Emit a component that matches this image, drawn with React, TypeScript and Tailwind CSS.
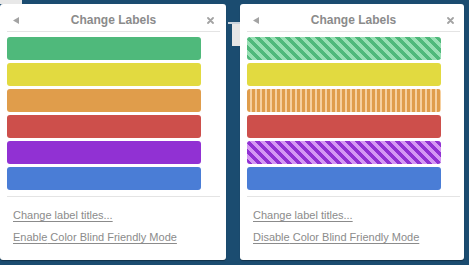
import React from "react";

type Bar = { cls: string };

const leftBars: Bar[] = [
  { cls: "bg-[#4fb97b]" },
  { cls: "bg-[#e2da40]" },
  { cls: "bg-[#e09d4b]" },
  { cls: "bg-[#cd4f4b]" },
  { cls: "bg-[#9131d3]" },
  { cls: "bg-[#4a7dd6]" },
];

const rightBars: Bar[] = [
  { cls: "bg-[repeating-linear-gradient(45deg,#4fb97b_0px,#4fb97b_3.6px,#97dfb4_3.6px,#97dfb4_7.1px)]" },
  { cls: "bg-[#e2da40]" },
  { cls: "bg-[repeating-linear-gradient(90deg,#e09d4b_0px,#e09d4b_2.6px,#f6d09f_2.6px,#f6d09f_5px)]" },
  { cls: "bg-[#cd4f4b]" },
  { cls: "bg-[repeating-linear-gradient(45deg,#9131d3_0px,#9131d3_3.6px,#d497f3_3.6px,#d497f3_7.1px)]" },
  { cls: "bg-[#4a7dd6]" },
];

function Panel({ width, bars, mode }: { width: string; bars: Bar[]; mode: string }) {
  return (
    <div
      className={`${width} h-[256px] shrink-0 bg-white rounded-[3px] shadow-[0_1px_1px_rgba(0,0,0,0.35)] px-[7px]`}
      style={{ fontFamily: '"Liberation Sans", Arial, sans-serif' }}
    >
      <div className="w-[213px] h-[28px] border-b border-[#e4e4e4] relative flex items-center justify-center">
        <svg className="absolute left-[6px] top-[13px]" width="6" height="7" viewBox="0 0 6 7">
          <polygon points="6,0 6,7 0,3.5" fill="#a3a3a3" />
        </svg>
        <span className="text-[12px] font-bold text-[#8b8b8b] leading-none mt-[4px]">Change Labels</span>
        <svg className="absolute left-[200px] top-[13px]" width="7" height="7" viewBox="0 0 7 7">
          <path d="M1 1 L6 6 M6 1 L1 6" stroke="#a3a3a3" strokeWidth="1.8" strokeLinecap="round" />
        </svg>
      </div>
      <div className="mt-[5px] flex flex-col gap-[3px]">
        {bars.map((b, i) => (
          <div key={i} className={`w-[194px] h-[23px] rounded-[3px] ${b.cls}`} />
        ))}
      </div>
      <div className="w-[213px] mt-[6px] border-t border-[#e4e4e4] pt-[10px] pl-[6px] flex flex-col gap-[6px]">
        <span className="text-[11px] leading-[16px] text-[#8b8b8b] underline underline-offset-[2px]">Change label titles...</span>
        <span className="text-[11px] leading-[16px] text-[#8b8b8b] underline underline-offset-[2px]">{mode} Color Blind Friendly Mode</span>
      </div>
    </div>
  );
}

export default function App() {
  return (
    <div className="w-[469px] h-[265px] bg-[#1b4c70] relative overflow-hidden">
      <div className="absolute left-0 top-0 w-[22px] h-[4px] bg-[#e8e8e8]" />
      <div className="absolute left-[228px] top-[22px] w-[12px] h-[2px] bg-[#c9d3dc]" />
      <div className="absolute left-[232px] top-[24px] w-[8px] h-[22px] bg-[#e6e6e6]" />
      <div className="flex gap-[14px] pt-[4px]">
        <Panel width="w-[226px]" bars={leftBars} mode="Enable" />
        <Panel width="w-[224px]" bars={rightBars} mode="Disable" />
      </div>
    </div>
  );
}
